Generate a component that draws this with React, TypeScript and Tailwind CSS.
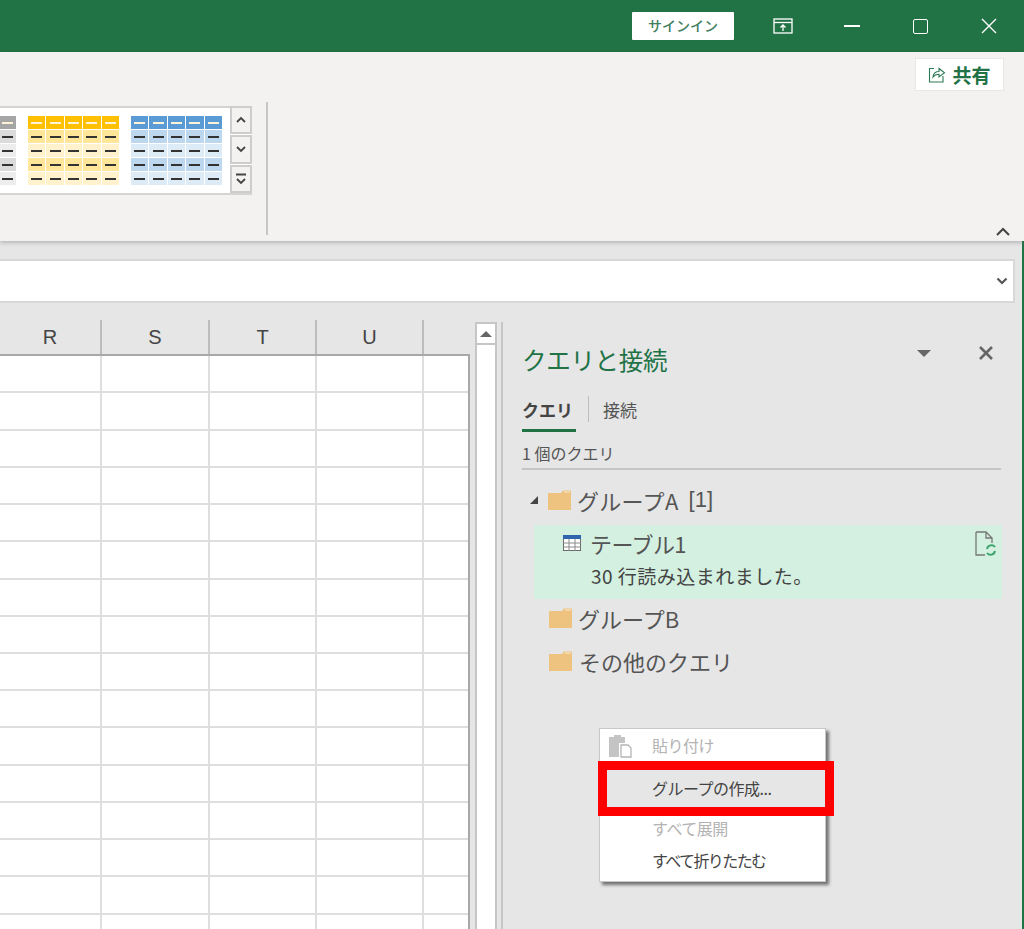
import React from "react";

const jp = "font-['Meiryo','Noto_Sans_CJK_JP','Noto_Sans_CJK_JP',sans-serif]";
const colWidths = ["w-[102px]", "w-[108px]", "w-[107px]", "w-[107px]", "w-[46px]"];
const rowHeights = [37, 38, 37, 37, 37, 38, 37, 37, 37, 37, 38, 37, 37, 37, 38, 37];

function Folder() {
  return (
    <svg width="23" height="20" viewBox="0 0 23 20" className="shrink-0">
      <path d="M0 3 L13 3 L15 0.5 L23 0.5 L23 20 L0 20 Z" fill="#eec27f" />
      <path d="M16 2 L22 2" stroke="#f8e4c4" strokeWidth="1.2" />
    </svg>
  );
}

function Swatches({ head, dark, light, cols = 5 }: { head: string; dark: string; light: string; cols?: number }) {
  const rows = [head, dark, light, dark, light];
  return (
    <div className="flex flex-col gap-[1px]">
      {rows.map((bg, r) => (
        <div key={r} className="flex gap-[1px] h-[13px]">
          {Array.from({ length: cols }).map((_, c) => (
            <div key={c} className="w-[17.4px] flex items-center justify-center" style={{ background: bg }}>
              <div className={r === 0 ? "w-[11px] h-[2px] bg-[#fff4d8]" : "w-[11px] h-[2px] bg-[#333333]"} />
            </div>
          ))}
        </div>
      ))}
    </div>
  );
}

function ScrollBtn({ kind }: { kind: "up" | "down" | "more" }) {
  return (
    <div className="h-[29px] w-[22px] bg-[#f3f2f1] border-2 border-[#cfcdcc] flex items-center justify-center">
      <svg width="12" height="12" viewBox="0 0 12 12" fill="none" stroke="#444444" strokeWidth="1.8">
        {kind === "up" && <path d="M2 8 L6 4 L10 8" />}
        {kind === "down" && <path d="M2 4 L6 8 L10 4" />}
        {kind === "more" && <path d="M1 1.5 H11 M2 6 L6 10 L10 6" />}
      </svg>
    </div>
  );
}

function ContextItem({ label, muted, icon, hot, tight }: { label: string; muted?: boolean; icon?: React.ReactNode; hot?: boolean; tight?: boolean }) {
  return (
    <div className={`flex items-center ${hot ? "h-[38px] bg-[#e6e6e6]" : "h-[32px]"}`}>
      <div className="w-[52px] flex justify-start pl-[8px]">{icon}</div>
      <span className={`text-[16px] leading-none ${tight ? "tracking-[-1.6px]" : "tracking-[-0.5px]"} ${muted ? "text-[#b3b3b3]" : "text-[#444444]"}`}>{label}</span>
    </div>
  );
}

export default function App() {
  return (
    <div className={`${jp} relative w-[1024px] h-[929px] overflow-hidden flex flex-col bg-[#e6e6e6]`}>
      {/* title bar */}
      <div className="h-[52px] shrink-0 bg-[#217346] flex items-center justify-end">
        <div className="w-[102px] h-[28px] bg-white rounded-[1px] flex items-center justify-center text-[14px] font-medium text-[#3f7f5f] mr-[39px] mt-[-1px]">
          サインイン
        </div>
        <svg width="20" height="16" viewBox="0 0 20 16" fill="none" stroke="#ffffff" strokeWidth="1.3" className="mr-[51px]">
          <rect x="1" y="1" width="18" height="14" />
          <path d="M1 4.5 H19" />
          <path d="M10 13 V7 M7.5 9.5 L10 7 L12.5 9.5" />
        </svg>
        <div className="w-[16px] h-[1.5px] bg-white mr-[53px]" />
        <div className="w-[15px] h-[15px] border-[1.5px] border-white rounded-[2px] mr-[53px]" />
        <svg width="16" height="16" viewBox="0 0 16 16" stroke="#ffffff" strokeWidth="1.4" className="mr-[27px]">
          <path d="M1 1 L15 15 M15 1 L1 15" />
        </svg>
      </div>

      {/* ribbon */}
      <div className="relative h-[189px] shrink-0 bg-[#f3f2f1] shadow-[0_2px_4px_rgba(0,0,0,0.2)] flex">
        <div className="h-[89px] w-[252px] ml-0 mt-[54px] flex border-y-2 border-[#d6d4d3] bg-white">
          <div className="flex flex-1 items-start pt-[8px] overflow-hidden">
            <div className="w-[16px] overflow-hidden shrink-0 flex justify-end">
              <Swatches cols={1} head="#a5a5a5" dark="#dbdbdb" light="#ededed" />
            </div>
            <div className="ml-[12px]">
              <Swatches head="#ffc000" dark="#ffe699" light="#fff2cc" />
            </div>
            <div className="ml-[12px]">
              <Swatches head="#5b9bd5" dark="#bdd7ee" light="#ddebf7" />
            </div>
          </div>
          <div className="flex flex-col mt-[-2px]">
            <ScrollBtn kind="up" />
            <div className="h-[1px]" />
            <ScrollBtn kind="down" />
            <div className="h-[1px]" />
            <ScrollBtn kind="more" />
          </div>
        </div>
        <div className="w-[2px] h-[133px] bg-[#c8c6c4] ml-[14px] mt-[50px]" />
        <div className="absolute right-[13px] top-[175px]">
          <svg width="16" height="10" viewBox="0 0 16 10" fill="none" stroke="#444444" strokeWidth="2">
            <path d="M2 8 L8 2 L14 8" />
          </svg>
        </div>
        <div className="absolute right-[20px] top-[6px] w-[89px] h-[33px] bg-white border border-[#e9e7e6] flex items-center justify-center gap-[6px]">
          <svg width="18" height="18" viewBox="0 0 18 18" fill="none" stroke="#2b7a55" strokeWidth="1.1">
            <path d="M6 2.5 H1.5 V16 H15 V10" />
            <path d="M5 11 C5.5 7 8 5.5 11 5.5 V2.5 L16.5 6.8 L11 11 V8.2 C9 8.2 6.5 9 5 11 Z" />
          </svg>
          <span className="text-[19px] leading-none font-bold text-[#217346]">共有</span>
        </div>
      </div>

      {/* formula bar */}
      <div className="h-[44px] shrink-0 mt-[18px] mr-[9px] bg-white border-y-2 border-r-2 border-[#d8d8d8] flex items-center justify-end pr-[5px]">
        <svg width="12" height="8" viewBox="0 0 12 8" fill="none" stroke="#555555" strokeWidth="2.2">
          <path d="M1.5 1.5 L6 6 L10.5 1.5" />
        </svg>
      </div>

      {/* sheet + pane */}
      <div className="flex-1 flex mt-[17px] min-h-0">
        <div className="w-[470px] shrink-0 flex flex-col">
          <div className="h-[36px] shrink-0 flex text-[20px] text-[#444444] font-['Liberation_Sans',sans-serif] border-b-2 border-[#a8a8a8]">
            {["R", "S", "T", "U", ""].map((c, i) => (
              <div key={i} className={`${colWidths[i]} shrink-0 flex items-center justify-center ${i < 4 ? "border-r-2 border-[#bcbcbc]" : ""}`}>
                {c}
              </div>
            ))}
          </div>
          <div className="flex-1 bg-white border-r-2 border-[#a8a8a8] overflow-hidden">
            {rowHeights.map((h, r) => (
              <div key={r} className="flex border-b-2 border-[#dedede]" style={{ height: h }}>
                {colWidths.map((w, c) => (
                  <div key={c} className={`${w} shrink-0 ${c < 4 ? "border-r-2 border-[#dedede]" : ""}`} />
                ))}
              </div>
            ))}
          </div>
        </div>

        {/* scrollbar */}
        <div className="w-[22px] ml-[5px] mt-[2px] shrink-0 bg-white border-x-2 border-[#c6c6c6] flex flex-col">
          <div className="h-[23px] border-y-2 border-[#c6c6c6] flex items-center justify-center">
            <div className="w-0 h-0 border-x-[6px] border-x-transparent border-b-[6px] border-b-[#666666]" />
          </div>
        </div>
        <div className="w-[2px] ml-[4px] mt-[2px] shrink-0 bg-[#c6c6c6]" />

        {/* task pane */}
        <div className="flex-1 min-w-0 pl-[19px] text-[#444444]">
          <div className="flex items-center h-[40px] mt-[20px]">
            <span className="text-[24.5px] leading-none text-[#217346] tracking-[-0.3px]">クエリと接続</span>
            <div className="ml-[250px] w-0 h-0 border-x-[7px] border-x-transparent border-t-[7px] border-t-[#666666] mt-[-14px]" />
            <svg width="16" height="16" viewBox="0 0 16 16" stroke="#666666" strokeWidth="2.6" className="ml-[47px] mt-[-14px]">
              <path d="M2 2 L14 14 M14 2 L2 14" />
            </svg>
          </div>
          <div className="flex mt-[16px] h-[36px]">
            <div className="w-[54px] h-[36px] border-b-[3px] border-[#217346] text-[17px] font-bold leading-none pt-[5px] text-[#444444]">クエリ</div>
            <div className="w-[1px] h-[26px] bg-[#bdbdbd] ml-[12px]" />
            <div className="ml-[14px] text-[17px] leading-none pt-[5px] text-[#555555]">接続</div>
          </div>
          <div className="w-[479px] h-[38px] border-b-2 border-[#c4c4c4] text-[16px] leading-none pt-[13px] text-[#555555]">1 個のクエリ</div>

          <div className="flex items-center h-[30px] mt-[15px]">
            <div className="ml-[8px] w-[8px] h-[8px] bg-[#444444] [clip-path:polygon(100%_0,100%_100%,0_100%)]" />
            <div className="ml-[10px]"><Folder /></div>
            <span className="ml-[6px] text-[22px] leading-none tracking-[0.3px] text-[#555555]">グループA</span>
            <span className="ml-[10px] text-[22px] leading-none text-[#555555] font-['Liberation_Sans',sans-serif]">[1]</span>
          </div>

          <div className="w-[468px] h-[74px] ml-[12px] mt-[10px] bg-[#d3f0e0] relative pl-[29px]">
            <div className="flex items-center h-[36px]">
              <svg width="18" height="16" viewBox="0 0 18 16" className="shrink-0">
                <rect x="0.5" y="0.5" width="17" height="15" fill="#ffffff" stroke="#6b6b6b" />
                <rect x="0" y="0" width="18" height="4" fill="#2f66ae" />
                <path d="M0 8 H18 M0 12 H18 M6 4 V16 M12 4 V16" stroke="#8a8a8a" strokeWidth="1" />
              </svg>
              <span className="ml-[9px] text-[22px] leading-none tracking-[-0.6px] text-[#555555]">テーブル1</span>
            </div>
            <div className="ml-[28px] mt-[5px] text-[19px] leading-none tracking-[0.5px] text-[#444444]">30 行読み込まれました。</div>
            <svg width="22" height="26" viewBox="0 0 22 26" fill="none" className="absolute right-[5px] top-[6px]">
              <path d="M1 1 H11 L17 7 V12 M11 1 V7 H17 M1 1 V24 H10" stroke="#777777" strokeWidth="1.3" />
              <path d="M12 18 A4.5 4.5 0 0 1 20 16 M20 20 A4.5 4.5 0 0 1 12 22" stroke="#3fa66f" strokeWidth="2" />
            </svg>
          </div>

          <div className="flex items-center h-[30px] mt-[4px] ml-[27px]">
            <Folder />
            <span className="ml-[6px] text-[22px] leading-none text-[#555555]">グループB</span>
          </div>
          <div className="flex items-center h-[30px] mt-[13px] ml-[27px]">
            <Folder />
            <span className="ml-[7px] text-[22px] leading-none text-[#555555]">その他のクエリ</span>
          </div>
        </div>
        <div className="w-[2px] shrink-0 bg-[#217346]" />
      </div>
      <div className="absolute right-0 top-[241px] w-[2px] h-[81px] bg-[#217346]" />

      {/* context menu */}
      <div className="absolute left-[599px] top-[728px] w-[227px] h-[154px] bg-white border border-[#c8c8c8] shadow-[3px_3px_3px_rgba(0,0,0,0.5)]">
        <ContextItem
          label="貼り付け"
          muted
          icon={
            <svg width="24" height="26" viewBox="0 0 24 26" fill="#c4c4c4">
              <path d="M1 5 H6 V3 H13 V5 H17 V11 H11 V25 H1 Z" />
              <path d="M13 13 H20 L23 16 V25 H13 Z" fill="#ffffff" stroke="#b5b5b5" strokeWidth="1.3" />
            </svg>
          }
        />
        <div className="h-[8px]" />
        <ContextItem label="グループの作成..." hot />
        <div className="h-[5px]" />
        <ContextItem label="すべて展開" muted />
        <ContextItem label="すべて折りたたむ" tight />
      </div>
      <div className="absolute left-[598px] top-[761px] w-[236px] h-[55px] border-[9px] border-[#ff0000]" />
    </div>
  );
}
